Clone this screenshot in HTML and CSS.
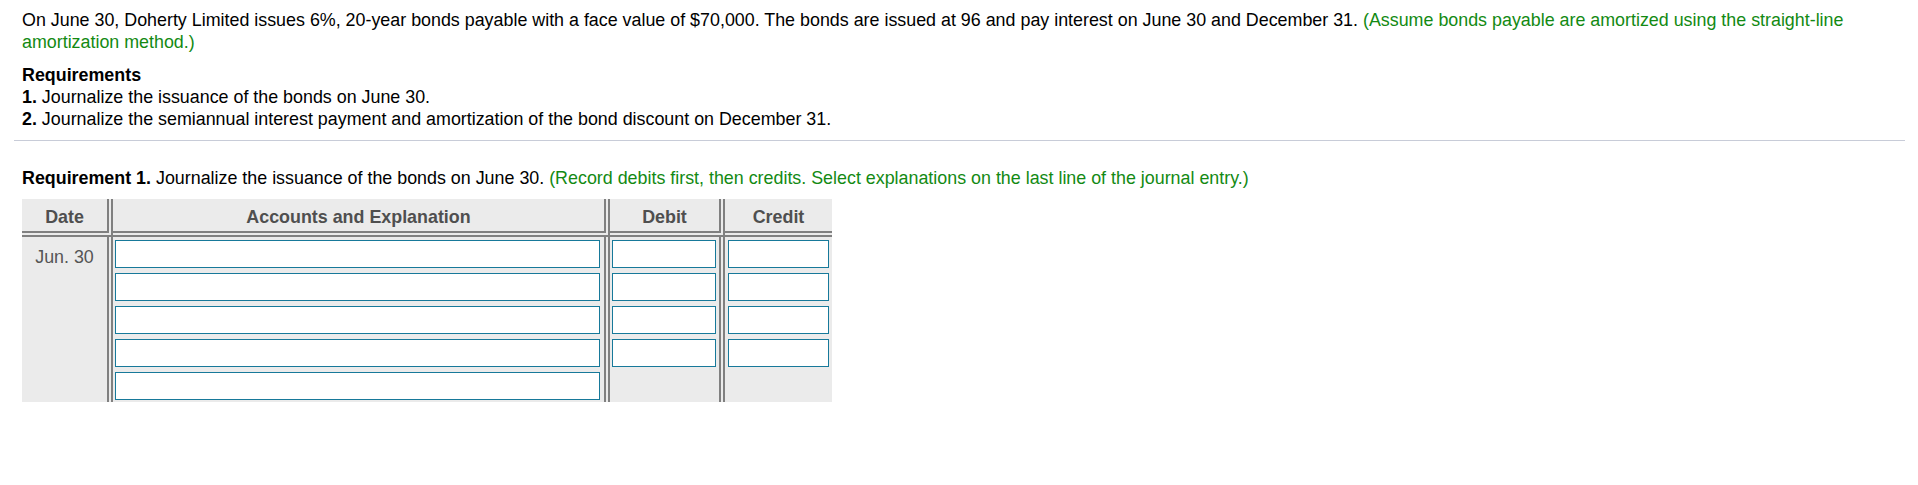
FILE: index.html
```html
<!DOCTYPE html>
<html>
<head>
<meta charset="utf-8">
<link rel="stylesheet" href="styles.css">
</head>
<body>
<div class="page">
  <div class="intro">
    <p class="para">On June 30, Doherty Limited issues 6%, 20-year bonds payable with a face value of $70,000. The bonds are issued at 96 and pay interest on June 30 and December 31. <span class="green">(Assume bonds payable are amortized using the straight-line amortization method.)</span></p>
    <div class="reqs">
      <div class="req-title">Requirements</div>
      <div><b>1.</b> Journalize the issuance of the bonds on June 30.</div>
      <div><b>2.</b> Journalize the semiannual interest payment and amortization of the bond discount on December 31.</div>
    </div>
  </div>
  <div class="sep"></div>
  <div class="part">
    <p class="para"><b>Requirement 1.</b> Journalize the issuance of the bonds on June 30. <span class="green">(Record debits first, then credits. Select explanations on the last line of the journal entry.)</span></p>
    <table class="journal">
      <thead>
        <tr>
          <th class="c-date">Date</th>
          <th class="c-acct">Accounts and Explanation</th>
          <th class="c-debit">Debit</th>
          <th class="c-credit">Credit</th>
        </tr>
      </thead>
      <tbody>
        <tr>
          <td class="c-date date-cell" rowspan="5">Jun. 30</td>
          <td class="c-acct"><input class="box" type="text"></td>
          <td class="c-debit"><input class="box" type="text"></td>
          <td class="c-credit"><input class="box" type="text"></td>
        </tr>
        <tr>
          <td class="c-acct"><input class="box" type="text"></td>
          <td class="c-debit"><input class="box" type="text"></td>
          <td class="c-credit"><input class="box" type="text"></td>
        </tr>
        <tr>
          <td class="c-acct"><input class="box" type="text"></td>
          <td class="c-debit"><input class="box" type="text"></td>
          <td class="c-credit"><input class="box" type="text"></td>
        </tr>
        <tr>
          <td class="c-acct"><input class="box" type="text"></td>
          <td class="c-debit"><input class="box" type="text"></td>
          <td class="c-credit"><input class="box" type="text"></td>
        </tr>
        <tr>
          <td class="c-acct"><input class="box" type="text"></td>
          <td class="c-debit"></td>
          <td class="c-credit"></td>
        </tr>
      </tbody>
    </table>
  </div>
</div>
</body>
</html>
```

FILE: styles.css
```css
html, body {
  margin: 0;
  padding: 0;
  background: #ffffff;
}
body {
  font-family: "Liberation Sans", Arial, sans-serif;
  font-size: 17.88px;
  line-height: 22px;
  color: #000000;
}
.page {
  padding: 9px 13px 0 14px;
}
.intro, .part {
  padding: 0 8px;
}
.para {
  margin: 0;
}
.green {
  color: #138a13;
}
.reqs {
  margin-top: 11px;
}
.req-title {
  font-weight: bold;
}
.sep {
  margin-top: 10px;
  border-top: 1px solid #c8ccd8;
  height: 0;
}
.part {
  padding-top: 26px;
}
.journal {
  margin-top: 10px;
  border-collapse: separate;
  border-spacing: 0;
  table-layout: fixed;
  width: 810px;
  background: #ebebeb;
}
.journal th, .journal td {
  box-sizing: border-box;
  padding: 0;
  vertical-align: top;
}
.journal th {
  height: 38px;
  padding: 7px 0 3px;
  font-weight: bold;
  color: #4f4f4f;
  text-align: center;
  border-bottom: 6px double #808080;
}
.c-date { width: 91px; border-right: 6px double #808080; }
.c-acct { width: 497px; border-right: 6px double #808080; }
.c-debit { width: 115px; border-right: 6px double #808080; }
.c-credit { width: 107px; }
.journal td {
  padding: 3px 3px 2px;
  height: 33px;
}
.journal td.c-acct { padding-left: 2px; padding-right: 4px; }
.journal td.c-debit { padding-left: 2px; padding-right: 3px; }
.journal td.date-cell {
  padding: 9px 0 0;
  text-align: center;
  color: #555555;
}
.box {
  display: block;
  box-sizing: border-box;
  width: 100%;
  height: 28px;
  margin: 0;
  padding: 0 4px;
  border: 1px solid #17799a;
  background: #ffffff;
  font-family: "Liberation Sans", Arial, sans-serif;
  font-size: 15px;
  outline: none;
}
```
